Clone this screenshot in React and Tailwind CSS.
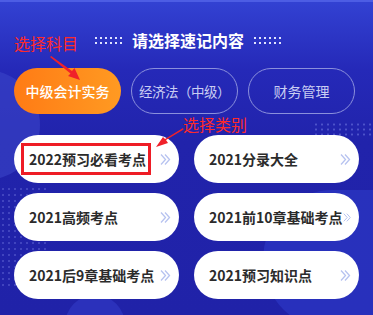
import React from "react";

const font = { fontFamily: '"Noto Sans CJK SC", "Noto Sans", sans-serif' };

function Dots() {
  return (
    <div className="flex flex-col gap-[3px]">
      {[0, 1].map((r) => (
        <div key={r} className="flex gap-[3px]">
          {[0, 1, 2, 3, 4, 5].map((i) => (
            <span key={i} className="block w-[2px] h-[2px] bg-[#dfe3ff]" />
          ))}
        </div>
      ))}
    </div>
  );
}

function Chev() {
  return (
    <svg width="11" height="13" viewBox="0 0 11 13" fill="none" stroke="#b7c3f0" strokeWidth="1.3">
      <path d="M1 1.5 L5.5 6.5 L1 11.5" />
      <path d="M5 1.5 L9.5 6.5 L5 11.5" />
    </svg>
  );
}

function Card({ text, boxed }) {
  return (
    <div className="relative h-[48px] rounded-full bg-white flex items-center justify-between pl-[15px] pr-[8px]">
      <span className="text-[14px] font-bold text-[#2b2b2b] whitespace-nowrap leading-none">{text}</span>
      <Chev />
      {boxed && (
        <div className="absolute left-[7px] top-[8px] w-[130px] h-[32px] border-[3px] border-[#ee1c25]" />
      )}
    </div>
  );
}

export default function App() {
  return (
    <div
      className="relative w-[373px] h-[315px] overflow-hidden bg-[linear-gradient(180deg,#3342d3_0%,#2529b8_22%,#2123ab_45%,#2022a8_100%)]"
      style={font}
    >
      {/* decorations */}
      <div className="absolute left-[-70px] top-[70px] w-[110px] h-[110px] rounded-full bg-[#3a44c8] opacity-60" />
      <div className="absolute right-[-90px] top-[190px] w-[200px] h-[140px] rounded-full bg-[#2a34c0] opacity-80" />
      <div className="absolute left-[65px] top-[295px] w-[60px] h-[60px] rounded-full bg-[#2b31bb]" />
      <div className="absolute right-0 top-[122px] w-[60px] h-[14px] bg-[radial-gradient(circle,rgba(160,170,255,0.35)_1px,transparent_1.2px)] bg-[length:6px_5px]" />
      <div className="absolute left-0 top-[186px] w-[50px] h-[100px] bg-[radial-gradient(circle,rgba(160,170,255,0.25)_1px,transparent_1.2px)] bg-[length:6px_6px]" />

      <div className="relative h-[2px] bg-[#4d5de4]" />

      <div className="relative flex flex-col">
        <div className="mt-[28px] h-[20px] flex items-center justify-center gap-[10px] pl-[3px]">
          <Dots />
          <span className="text-[16px] font-bold text-white leading-none">请选择速记内容</span>
          <Dots />
        </div>

        <div className="mt-[18px] flex gap-[10px] px-[14px]">
          <div className="w-[107px] h-[46px] rounded-full bg-[linear-gradient(90deg,#ff7b15,#ff9a22)] flex items-center justify-center text-[14px] font-medium text-white">
            中级会计实务
          </div>
          <div className="w-[107px] h-[46px] rounded-full border border-[#8b90dc] flex items-center justify-center text-[13.5px] text-[#c9cdf2] whitespace-nowrap tracking-[-0.5px]">
            经济法（中级）
          </div>
          <div className="w-[107px] h-[46px] rounded-full border border-[#8b90dc] flex items-center justify-center text-[14px] text-[#c9cdf2]">
            财务管理
          </div>
        </div>

        <div className="mt-[21px] grid grid-cols-[165px_165px] gap-x-[15px] gap-y-[10px] pl-[14px]">
          <Card text="2022预习必看考点" boxed />
          <Card text="2021分录大全" />
          <Card text="2021高频考点" />
          <Card text="2021前10章基础考点" />
          <Card text="2021后9章基础考点" />
          <Card text="2021预习知识点" />
        </div>
      </div>

      {/* annotations */}
      <span className="absolute left-[14px] top-[33px] text-[16px] text-[#ff2a2a] leading-[20px]">选择科目</span>
      <span className="absolute left-[183px] top-[114px] text-[16px] text-[#ff2a2a] leading-[20px]">选择类别</span>
      <svg className="absolute left-0 top-0" width="373" height="315" viewBox="0 0 373 315">
        <polygon points="50,57 51.2,56 72,71 74.5,68 80,80 68,76 70.5,73.5" fill="#f0212a" />
        <polygon points="183,128 183.6,129.5 166,140 168,143 156,147 163,137 165,139" fill="#f0212a" />
      </svg>
    </div>
  );
}
